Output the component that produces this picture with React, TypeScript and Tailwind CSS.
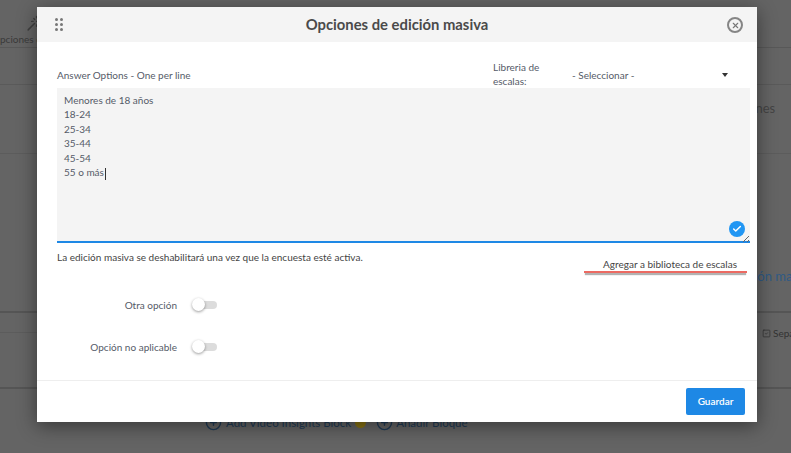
import { Check, CirclePlus, SquareCheck, Wand, X } from "lucide-react";

const font = { fontFamily: 'Lato, "Noto Sans", sans-serif' };

const ages = ["Menores de 18 años", "18-24", "25-34", "35-44", "45-54", "55 o más"];

function Toggle() {
  return (
    <div className="relative h-[8px] w-[24px] rounded-full bg-[#dcdcdc]">
      <div className="absolute left-[-1px] top-[-3px] h-[13px] w-[13px] rounded-full bg-white shadow-[0_1px_3px_rgba(0,0,0,0.4)]" />
    </div>
  );
}

function OptionRow({ label }: { label: string }) {
  return (
    <div className="flex h-[42px] items-center">
      <span className="w-[120px] text-right text-[10px] text-[#555b68]">{label}</span>
      <div className="ml-[16px]">
        <Toggle />
      </div>
    </div>
  );
}

export default function App() {
  return (
    <div style={font} className="relative h-[453px] w-[791px] overflow-hidden whitespace-nowrap bg-[#646464]">
      {/* page behind the overlay */}
      <div className="h-[48px] border-b border-[#585858] pt-[15px]">
        <Wand size={17} className="ml-[26px] text-[#3f3f3f]" />
        <span className="mt-[2px] block text-[10px] leading-[10px] text-[#3a3a3a]">pciones de</span>
      </div>
      <div className="h-[37px] border-b border-[#5a5a5a]" />
      <div className="flex h-[69px] items-center border-b border-[#5c5c5c] pl-[745px]">
        <span className="mt-[-20px] text-[13px] text-[#444]">iones</span>
      </div>
      <div className="h-[159px] border-b-2 border-[#555] pl-[748px] pt-[109px]">
        <span className="text-[13px] text-[#2f5a85]">ción manual</span>
      </div>
      <div className="flex h-[76px] border-b-2 border-[#555]">
        <div className="h-[20px] w-[37px] shrink-0 border-b border-[#5c5c5c]" />
        <span className="ml-[725px] mt-[14px] flex h-[12px] shrink-0 items-center gap-[2px] text-[10px] text-[#333]">
          <SquareCheck size={9} className="shrink-0" />
          Separar
        </span>
      </div>
      <div className="flex items-center pl-[205px] pt-[25px] text-[11.5px] text-[#203a55]">
        <span className="flex items-center gap-[4px]">
          <CirclePlus size={17} />
          Add Video Insights Block
          <span className="h-[11px] w-[11px] rounded-full bg-[#8a7414]" />
        </span>
        <span className="ml-[10px] flex items-center gap-[3px]">
          <CirclePlus size={17} />
          Añadir Bloque
        </span>
      </div>

      {/* modal */}
      <div className="absolute left-[37px] top-[7px] w-[720px] bg-white shadow-[0_4px_18px_rgba(0,0,0,0.45)]">
        <div className="relative flex h-[35px] items-center justify-center bg-[#f4f4f4]">
          <div className="absolute left-[18px] top-[11px] grid grid-cols-2 gap-x-[2px] gap-y-[2px]">
            {[0, 1, 2, 3, 4, 5].map((i) => (
              <span key={i} className="h-[3px] w-[3px] rounded-full bg-[#777]" />
            ))}
          </div>
          <h1 className="text-[14.8px] font-bold text-[#4a4a4a]">Opciones de edición masiva</h1>
          <div className="absolute right-[14px] top-[10px] flex h-[16px] w-[16px] items-center justify-center rounded-full border-2 border-[#858585] text-[#777]">
            <X size={9} strokeWidth={3} />
          </div>
        </div>

        <div className="pl-[20px] pr-[7px]">
          <div className="flex h-[46px] items-end">
            <span className="w-[436px] pb-[6px] text-[10px] leading-[14px] text-[#555b68]">Answer Options - One per line</span>
            <span className="w-[70px] whitespace-normal text-[10px] leading-[14px] text-[#555b68]">
              Libreria de
              <br />
              escalas:
            </span>
            <span className="ml-[9px] pb-[6px] text-[10px] leading-[14px] text-[#555b68]">- Seleccionar -</span>
            <span className="mb-[11px] ml-auto mr-[22px] h-0 w-0 border-x-[3px] border-t-[4px] border-x-transparent border-t-[#333]" />
          </div>

          <div className="relative h-[155px] border-b-2 border-[#1e88e5] bg-[#f4f4f4] px-[7px] pt-[5px] text-[10px] leading-[14.4px] text-[#555b68]">
            {ages.map((a, i) => (
              <div key={a}>
                {a}
                {i === ages.length - 1 && <span className="ml-px inline-block h-[12px] w-px bg-[#333] align-middle" />}
              </div>
            ))}
            <div className="absolute bottom-[4px] right-[5px] flex h-4 w-4 items-center justify-center rounded-full bg-[#2196f3] text-white">
              <Check size={10} strokeWidth={3.5} />
            </div>
            <svg className="absolute bottom-[-2px] right-0" width="8" height="8" viewBox="0 0 8 8" stroke="#666" fill="none">
              <path d="M1 7 7 1M5 7 7 5" />
            </svg>
          </div>

          <div className="flex h-[37px] items-start pt-[6px]">
            <span className="text-[10px] leading-[16px] text-[#444]">
              La edición masiva se deshabilitará una vez que la encuesta esté activa.
            </span>
            <div className="ml-auto mr-[3px] mt-[8px] w-[163px] border-b-[2px] border-[#ec6a62] pr-[10px] text-right text-[10px] leading-[14px] text-[#444] shadow-[0_3px_1px_-1px_rgba(0,0,0,0.3)]">
              Agregar a biblioteca de escalas
            </div>
          </div>

          <div className="pt-[4px]">
            <OptionRow label="Otra opción" />
            <OptionRow label="Opción no aplicable" />
          </div>
        </div>

        <div className="mt-[12px] flex h-[42px] items-center justify-end border-t border-[#eeeeee] pr-[12px]">
          <button className="h-[27px] w-[59px] rounded-[2px] bg-[#1e88e5] text-[10px] font-semibold text-white">Guardar</button>
        </div>
      </div>
    </div>
  );
}
